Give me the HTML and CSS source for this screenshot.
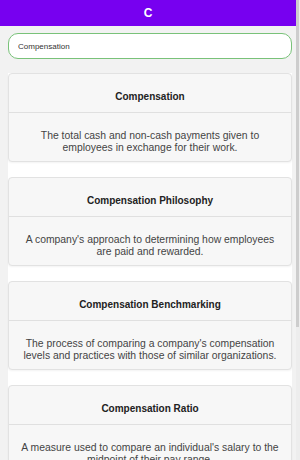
FILE: index.html
```html
<!DOCTYPE html>
<html lang="en">
<head>
    <meta charset="UTF-8">
    <meta name="viewport" content="width=device-width, initial-scale=1.0">
    <title>Glossary - C</title>
    <link rel="stylesheet" href="styles.css">
</head>
<body>
    <div class="app">
        <div class="topbar">
            <h1>C</h1>
        </div>
        <div class="search">
            <input type="text" class="search-input" value="Compensation">
        </div>
        <div class="term-list">
            <div class="term-card">
                <div class="term-title">Compensation</div>
                <div class="term-body">The total cash and non-cash payments given to employees in exchange for their work.</div>
            </div>
            <div class="term-card">
                <div class="term-title">Compensation Philosophy</div>
                <div class="term-body">A company's approach to determining how employees are paid and rewarded.</div>
            </div>
            <div class="term-card">
                <div class="term-title">Compensation Benchmarking</div>
                <div class="term-body">The process of comparing a company's compensation levels and practices with those of similar organizations.</div>
            </div>
            <div class="term-card">
                <div class="term-title">Compensation Ratio</div>
                <div class="term-body">A measure used to compare an individual's salary to the midpoint of their pay range.</div>
            </div>
            <div class="term-card">
                <div class="term-title">Compensation Strategy</div>
                <div class="term-body">A plan that outlines how a company will reward employees to attract and retain talent.</div>
            </div>
        </div>
    </div>
    <div class="scroll-track"><div class="scroll-thumb"></div></div>
</body>
</html>
```

FILE: styles.css
```css
* {
    box-sizing: border-box;
    margin: 0;
    padding: 0;
}
body {
    font-family: "Liberation Sans", Arial, sans-serif;
    background-color: #f2f2f2;
    color: #333;
}
.app {
    margin-right: 4px;
}
/* thin scroll indicator on the right edge */
.scroll-track {
    position: fixed;
    top: 0;
    right: 0;
    width: 4px;
    height: 100%;
    background: #ededed;
}
.scroll-thumb {
    width: 3px;
    height: 327px;
    background: #cdcdcd;
}
.topbar {
    background-color: #7700f0;
    height: 26px;
    display: flex;
    align-items: center;
    justify-content: center;
}
.topbar h1 {
    color: #fff;
    font-size: 12px;
    font-weight: bold;
}
.search {
    padding: 7px 4px 14px 8px;
}
.search-input {
    width: 100%;
    height: 26px;
    border: 1px solid #79c279;
    border-radius: 10px;
    background: #fff;
    padding: 0 9px;
    font-family: inherit;
    font-size: 8px;
    color: #333;
    outline: none;
}
.term-list {
    margin: 0 4px 0 8px;
    background-color: #fff;
}
.term-card {
    background-color: #f7f7f7;
    border: 1px solid #e2e2e2;
    border-radius: 4px;
    margin-bottom: 15px;
    text-align: center;
    box-shadow: 0 1px 2px rgba(0, 0, 0, 0.05);
}
.term-title {
    font-size: 10px;
    font-weight: bold;
    color: #222;
    line-height: 14px;
    padding: 16px 10px 8px;
    border-bottom: 1px solid #e0e0e0;
}
.term-body {
    font-size: 10.4px;
    color: #444;
    line-height: 12px;
    padding: 17px 10px 7px;
}
```
